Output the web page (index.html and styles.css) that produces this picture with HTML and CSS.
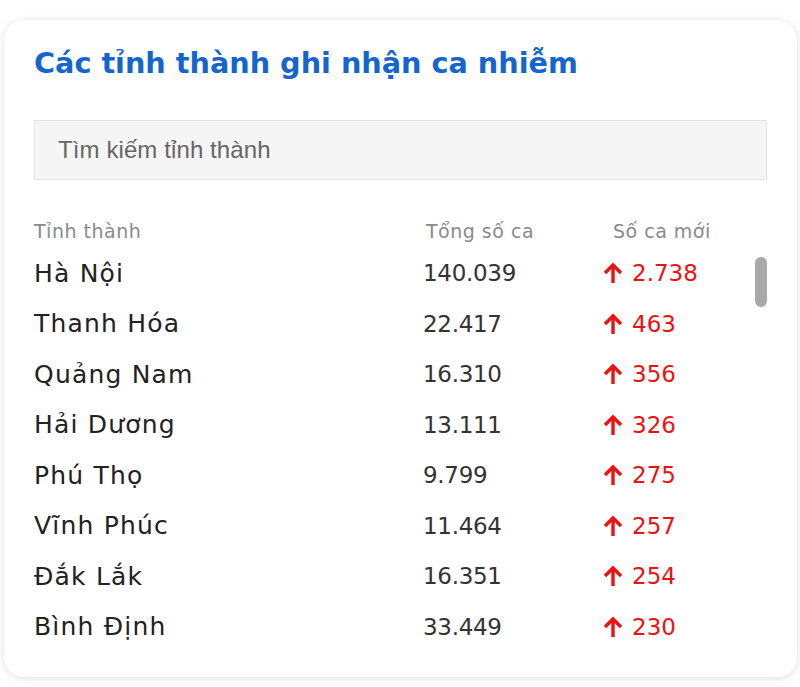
FILE: index.html
```html
<!DOCTYPE html>
<html lang="vi">
<head>
<meta charset="utf-8">
<title>Các tỉnh thành ghi nhận ca nhiễm</title>
<link rel="stylesheet" href="styles.css">
</head>
<body>
<div class="card">
  <h2 class="title">Các tỉnh thành ghi nhận ca nhiễm</h2>
  <div class="search"><input type="text" placeholder="Tìm kiếm tỉnh thành"></div>
  <div class="table">
    <div class="row head">
      <div class="c-name">Tỉnh thành</div>
      <div class="c-total">Tổng số ca</div>
      <div class="c-new">Số ca mới</div>
    </div>
    <div class="body">
      <div class="thumb"></div>
      <div class="row"><div class="c-name">Hà Nội</div><div class="c-total">140.039</div><div class="c-new"><svg class="up" viewBox="0 0 20 22"><path d="M10 21V3M2 11l8-8 8 8"/></svg>2.738</div></div>
      <div class="row"><div class="c-name">Thanh Hóa</div><div class="c-total">22.417</div><div class="c-new"><svg class="up" viewBox="0 0 20 22"><path d="M10 21V3M2 11l8-8 8 8"/></svg>463</div></div>
      <div class="row"><div class="c-name">Quảng Nam</div><div class="c-total">16.310</div><div class="c-new"><svg class="up" viewBox="0 0 20 22"><path d="M10 21V3M2 11l8-8 8 8"/></svg>356</div></div>
      <div class="row"><div class="c-name">Hải Dương</div><div class="c-total">13.111</div><div class="c-new"><svg class="up" viewBox="0 0 20 22"><path d="M10 21V3M2 11l8-8 8 8"/></svg>326</div></div>
      <div class="row"><div class="c-name">Phú Thọ</div><div class="c-total">9.799</div><div class="c-new"><svg class="up" viewBox="0 0 20 22"><path d="M10 21V3M2 11l8-8 8 8"/></svg>275</div></div>
      <div class="row"><div class="c-name">Vĩnh Phúc</div><div class="c-total">11.464</div><div class="c-new"><svg class="up" viewBox="0 0 20 22"><path d="M10 21V3M2 11l8-8 8 8"/></svg>257</div></div>
      <div class="row"><div class="c-name">Đắk Lắk</div><div class="c-total">16.351</div><div class="c-new"><svg class="up" viewBox="0 0 20 22"><path d="M10 21V3M2 11l8-8 8 8"/></svg>254</div></div>
      <div class="row"><div class="c-name">Bình Định</div><div class="c-total">33.449</div><div class="c-new"><svg class="up" viewBox="0 0 20 22"><path d="M10 21V3M2 11l8-8 8 8"/></svg>230</div></div>
    </div>
  </div>
</div>
</body>
</html>
```
FILE: styles.css
```css
html, body {
  margin: 0;
  padding: 0;
  background: #ffffff;
}
body {
  padding: 20px 3px 10px 4px;
  font-family: "DejaVu Sans", "Noto Sans", sans-serif;
}
.card {
  height: 657px;
  box-sizing: border-box;
  background: #ffffff;
  border-radius: 20px;
  box-shadow: 0 1px 8px rgba(0, 0, 0, 0.13);
  padding: 24px 30px 0 30px;
}
.title {
  margin: 0;
  font-size: 28.7px;
  line-height: 38px;
  font-weight: 700;
  color: #1565cf;
}
.search {
  margin-top: 38px;
}
.search input {
  display: block;
  width: 100%;
  box-sizing: border-box;
  height: 60px;
  border: 1px solid #e3e3e3;
  background: #f5f5f5;
  padding: 0 23px;
  font-family: "Liberation Sans", Arial, sans-serif;
  font-size: 24px;
  letter-spacing: 0.1px;
  color: #333;
  outline: none;
}
.search input::placeholder {
  color: #666;
}
.table {
  margin-top: 37px;
}
.row {
  display: grid;
  grid-template-columns: 389px 180px 1fr;
  align-items: center;
  height: 50.5px;
  font-size: 25px;
  letter-spacing: 1.2px;
  color: #222;
}
.row .c-total {
  color: #333;
  font-size: 23px;
  letter-spacing: -0.3px;
}
.c-new {
  display: flex;
  align-items: center;
  color: #ee1111;
  font-size: 23px;
  letter-spacing: 0;
}
.row.head {
  height: 28px;
  font-size: 19px;
  letter-spacing: 0.5px;
  color: #8a8a8a;
  margin-bottom: 3px;
}
.row.head .c-total {
  padding-left: 3px;
  font-size: 19px;
  letter-spacing: 0.5px;
  color: #8a8a8a;
}
.row.head .c-new {
  padding-left: 10px;
  font-size: 19px;
  letter-spacing: 0.5px;
  color: #8a8a8a;
}
.body {
  position: relative;
}
.thumb {
  position: absolute;
  right: 0;
  top: 9px;
  width: 12px;
  height: 50px;
  border-radius: 6px;
  background: #a9a9a9;
}
.up {
  width: 20px;
  height: 22px;
  margin-right: 9px;
  fill: none;
  stroke: #ee1111;
  stroke-width: 3.4;
  stroke-linecap: butt;
  stroke-linejoin: miter;
}
```
